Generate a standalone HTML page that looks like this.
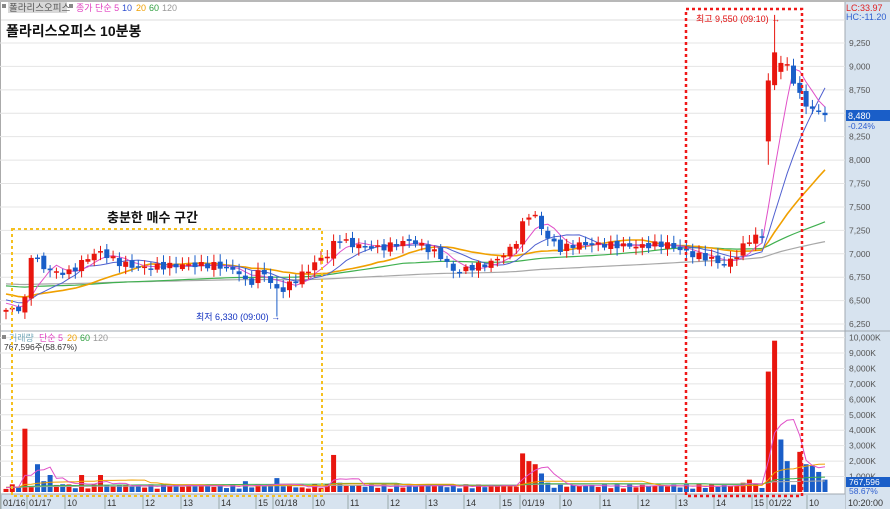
<!DOCTYPE html>
<html><head><meta charset="utf-8">
<style>
html,body{margin:0;padding:0;background:#fff;}
body{width:890px;height:509px;overflow:hidden;position:relative;font-family:"Liberation Sans","Noto Sans CJK KR",sans-serif;}
svg text{font-family:"Liberation Sans","Noto Sans CJK KR",sans-serif;}
</style></head><body>
<svg id="s" width="890" height="509" xmlns="http://www.w3.org/2000/svg">
<rect x="0" y="0" width="890" height="509" fill="#fff"/>
<rect x="0" y="0" width="890" height="2" fill="#b8b8b8"/>
<rect x="845" y="2" width="45" height="507" fill="#d7e3ef"/>
<line x1="845" y1="2" x2="845" y2="509" stroke="#a0a8b0"/>
<rect x="0" y="494" width="845" height="15" fill="#d7e3ef"/>
<line x1="0" y1="494" x2="845" y2="494" stroke="#a0a8b0"/>
<line x1="0" y1="331" x2="890" y2="331" stroke="#a0a8b0"/>
<line x1="0" y1="20" x2="845" y2="20" stroke="#ddd"/>
<line x1="0" y1="43" x2="845" y2="43" stroke="#ddd"/>
<line x1="0.5" y1="2" x2="0.5" y2="509" stroke="#aaa"/>
<g id="grid"></g>
<g id="lines"></g>
<g id="cand"></g>
<g id="vol"></g>
<rect x="2" y="4" width="4" height="4" fill="#888"/>
<rect x="8" y="2" width="59" height="11" fill="#d8d8d8"/>
<text x="9" y="11" font-size="9.5" fill="#555">폴라리스오피스</text>
<rect x="69" y="4" width="4" height="4" fill="#888"/>
<text x="76" y="11" font-size="9" fill="#e040c0">종가 단순 5</text>
<text x="122" y="11" font-size="9" fill="#3050d0">10</text>
<text x="136" y="11" font-size="9" fill="#f0a000">20</text>
<text x="149" y="11" font-size="9" fill="#30a040">60</text>
<text x="162" y="11" font-size="9" fill="#999">120</text>
<text x="6" y="36" font-size="14" font-weight="bold" fill="#111">폴라리스오피스 10분봉</text>
<text x="107" y="222" font-size="13" font-weight="bold" fill="#111">충분한 매수 구간</text>
<rect x="12" y="229" width="310" height="267" fill="none" stroke="#f5c020" stroke-width="2" stroke-dasharray="3,3"/>
<rect x="686" y="9" width="116" height="487" fill="none" stroke="#f01818" stroke-width="2.5" stroke-dasharray="3,3"/>
<text x="696" y="22" font-size="9" fill="#e01010">최고 9,550 (09:10) →</text>
<text x="196" y="320" font-size="9" fill="#1030c0">최저 6,330 (09:00) →</text>
<g id="axis" font-size="8.5" fill="#555"></g>
<rect x="846" y="110" width="44" height="11" fill="#1a5ec8"/>
<text x="848" y="119" font-size="9" fill="#fff">8,480</text>
<text x="848" y="129" font-size="8.5" fill="#3060d0">-0.24%</text>
<text x="846" y="11" font-size="9" fill="#e02020">LC:33.97</text>
<text x="846" y="20" font-size="9" fill="#3060d0">HC:-11.20</text>
<rect x="2" y="335" width="4" height="4" fill="#888"/>
<text x="9" y="341" font-size="9" fill="#7ab">거래량</text>
<text x="39" y="341" font-size="9" fill="#e040c0">단순 5</text>
<text x="67" y="341" font-size="9" fill="#f0a000">20</text>
<text x="80" y="341" font-size="9" fill="#30a040">60</text>
<text x="93" y="341" font-size="9" fill="#999">120</text>
<text x="4" y="350" font-size="8.5" fill="#333">767,596주(58.67%)</text>
<rect x="846" y="477" width="44" height="10" fill="#1a5ec8"/>
<text x="849" y="485" font-size="8.5" fill="#fff">767,596</text>
<text x="849" y="494" font-size="8.5" fill="#3060d0">58.67%</text>
<text x="848" y="506" font-size="9" fill="#333">10:20:00</text>
</svg>
<script>
var NS="http://www.w3.org/2000/svg";
function el(p,t,a){var e=document.createElementNS(NS,t);for(var k in a)e.setAttribute(k,a[k]);document.getElementById(p).appendChild(e);return e;}
function py(p){return 43+(9250-p)/250*23.42;}
function vy(v){return 492-v*0.01544;}
for(var p=6250;p<=9250;p+=250){var y=py(p);el("grid","line",{x1:0,y1:y,x2:845,y2:y,stroke:"#e4e4e4"});
 if(p!=8500&&p!=9500){var t=el("axis","text",{x:849,y:y+3});t.textContent=(p/1000|0)+","+String(p%1000).padStart(3,"0");}}
for(var v=1000;v<=10000;v+=1000){var y=vy(v);el("grid","line",{x1:0,y1:y,x2:845,y2:y,stroke:"#e4e4e4"});
 var t=el("axis","text",{x:849,y:y+3});t.textContent=(v/1000|0)+","+"000K";}
var lab=[[1,"01/16"],[27,"01/17"],[65,"10"],[105,"11"],[143,"12"],[181,"13"],[219,"14"],[256,"15"],[273,"01/18"],[313,"10"],[348,"11"],[388,"12"],[426,"13"],[464,"14"],[500,"15"],[520,"01/19"],[560,"10"],[600,"11"],[638,"12"],[676,"13"],[714,"14"],[752,"15"],[767,"01/22"],[807,"10"]];
lab.forEach(function(l){var t=el("axis","text",{x:l[0]+2,y:506,"font-size":9,fill:"#333"});t.textContent=l[1];el("grid","line",{x1:l[0],y1:495,x2:l[0],y2:509,stroke:"#9aa"});});
var kp=[[5,6400],[24,6420],[30,7000],[36,6950],[44,6850],[55,6800],[70,6800],[90,6980],[100,7020],[120,6900],[140,6850],[180,6880],[215,6880],[240,6800],[248,6650],[262,6850],[272,6650],[282,6600],[292,6700],[305,6800],[320,6950],[330,7000],[336,7180],[350,7100],[380,7060],[410,7140],[420,7100],[440,6980],[455,6800],[470,6850],[490,6900],[505,7000],[515,7100],[522,7300],[528,7420],[535,7400],[545,7200],[560,7050],[575,7100],[600,7100],[640,7080],[665,7110],[690,7000],[710,6950],[725,6880],[738,7000],[748,7150],[762,7200],[769,8200],[776,9100],[783,9050],[790,8950],[797,8750],[804,8600],[812,8550],[822,8480]];
function interp(x){for(var i=1;i<kp.length;i++){if(x<=kp[i][0]){var a=kp[i-1],b=kp[i],t=(x-a[0])/(b[0]-a[0]);return a[1]+(b[1]-a[1])*t;}}return kp[kp.length-1][1];}
var xs=[],cl=[],N=131;
for(var i=0;i<N;i++){var x=6+i*6.3;xs.push(x);cl.push(interp(x)+ (Math.sin(i*2.7)*35));}
cl[N-1]=8480;
var op=[cl[0]-20];for(var i=1;i<N;i++)op.push(cl[i-1]+Math.sin(i*1.3)*20);
function idx(x){return Math.round((x-6)/6.3);}
var bi=idx(769);op[bi]=8200;cl[bi]=8850;var bj=idx(775);op[bj]=8800;cl[bj]=9150;
var lowI=idx(280);
for(var i=0;i<N;i++){var o=op[i],c=cl[i],up=c>=o;var hi=Math.max(o,c)+20+Math.abs(Math.sin(i*3.1))*60,lo=Math.min(o,c)-20-Math.abs(Math.cos(i*2.3))*60;
 if(i==bj)hi=9550;if(i==bi)lo=7950;if(i==lowI)lo=6330;
 var col=up?"#e8160e":"#1a5ec8",x=xs[i];
 el("cand","line",{x1:x,y1:py(hi),x2:x,y2:py(lo),stroke:col,"stroke-width":1});
 var y1=py(Math.max(o,c)),h=Math.max(1.5,py(Math.min(o,c))-y1);
 el("cand","rect",{x:x-2.5,y:y1,width:5,height:h,fill:col});}
var pre=[];for(var i=0;i<120;i++)pre.push(6700+(i>100?-(i-100)*12:0));
var all=pre.concat(cl);
function ma(n,col,w){var d="";for(var i=0;i<N;i++){var s=0;for(var k=0;k<n;k++)s+=all[120+i-k];d+=(i?"L":"M")+xs[i].toFixed(1)+","+py(s/n).toFixed(1);}el("lines","path",{d:d,fill:"none",stroke:col,"stroke-width":w});}
ma(120,"#a8a8a8",1.2);ma(60,"#40b050",1.2);ma(20,"#f0a000",1.6);ma(10,"#5060d0",1);ma(5,"#e050c8",1);
var vs=[];for(var i=0;i<N;i++)vs.push(200+Math.abs(Math.sin(i*1.7))*300);
var sp=[[28,4100],[35,1800],[41,700],[48,1100],[60,500],[79,1100],[98,1100],[170,400],[248,700],[275,900],[300,300],[332,2400],[340,600],[522,2500],[530,2000],[537,1800],[543,1200],[548,600],[742,600],[750,800],[757,500],[770,7800],[776,9800],[783,3400],[790,2000],[797,2600],[803,1800],[810,1700],[816,1300],[822,800]];
sp.forEach(function(s){vs[idx(s[0])]=s[1];});
for(var i=0;i<N;i++){var up=cl[i]>=op[i];if(i==idx(28)||i==idx(332)||i==idx(770)||i==idx(776)||i==idx(797))up=true;if(i==idx(783)||i==idx(790)||i==idx(35)||i==idx(522))up=(i==idx(522));
 var y=vy(vs[i]);el("vol","rect",{x:xs[i]-2.5,y:y,width:5,height:492-y,fill:up?"#e8160e":"#1a5ec8"});}
function vma(n,col){var d="";for(var i=0;i<N;i++){var s=0,c=0;for(var k=0;k<n&&i-k>=0;k++){s+=vs[i-k];c++;}if(c<n)s+=300*(n-c);d+=(i?"L":"M")+xs[i].toFixed(1)+","+vy(s/n).toFixed(1);}el("vol","path",{d:d,fill:"none",stroke:col,"stroke-width":1});}
vma(120,"#a8a8a8");vma(60,"#40b050");vma(20,"#f0a000");vma(5,"#e050c8");
var svg=document.getElementById("s");
var kids=[].slice.call(svg.children).filter(function(e){return e.tagName=="rect"&&(e.getAttribute("stroke-dasharray"));});
kids.forEach(function(k){svg.appendChild(k);});
</script>
</body></html>
